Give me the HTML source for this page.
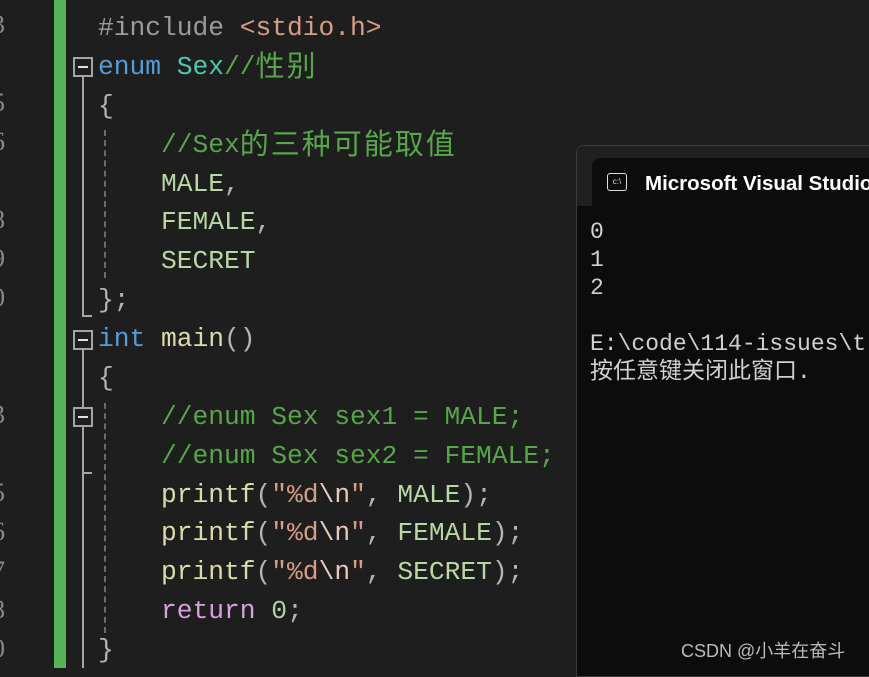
<!DOCTYPE html>
<html><head><meta charset="utf-8"><style>
body{margin:0;width:869px;height:668px;overflow:hidden;background:#1e1e1e;position:relative;font-family:"Liberation Mono","Noto Sans CJK SC",monospace}
.l{position:absolute;left:98px;height:39px;line-height:39px;font-size:26.3px;white-space:pre;color:#b4b4b4;font-family:"Liberation Mono","Noto Serif CJK SC",monospace;letter-spacing:-0.03px}
.cj{letter-spacing:2px;font-size:29px;font-family:"Noto Sans CJK SC",sans-serif;line-height:0;position:relative;top:2px}
.pp{color:#9b9b9b}.inc{color:#d69d85}.kw{color:#569cd6}.ty{color:#4ec9b0}.cm{color:#57a64a}.en{color:#b8d7a3}.fn{color:#dcdcaa}.st{color:#d69d85}.es{color:#e8c9bb}.rt{color:#d8a0df}.nu{color:#b5cea8}
.box{position:absolute;left:73px;width:16px;height:16px;border:2px solid #a5a5a5;box-sizing:content-box;background:#1e1e1e;z-index:2}
.box:after{content:"";position:absolute;left:3px;top:7px;width:10px;height:2px;background:#e0e0e0}
.v{position:absolute;width:2px;background:#a5a5a5}
.d{position:absolute;left:104px;width:0;border-left:2px dashed #6a6a6a}
.ln{position:absolute;left:-8px;font-size:26px;color:#8a8a8a;font-family:"Liberation Serif",serif}
</style></head><body>
<div style="position:absolute;left:54px;top:0;width:12px;height:668px;background:#57b356"></div>
<div class="ln" style="top:10px">3</div><div class="ln" style="top:88px">5</div><div class="ln" style="top:127px">6</div><div class="ln" style="top:205px">8</div><div class="ln" style="top:244px">9</div><div class="ln" style="top:283px">0</div><div class="ln" style="top:400px">3</div><div class="ln" style="top:478px">5</div><div class="ln" style="top:517px">6</div><div class="ln" style="top:556px">7</div><div class="ln" style="top:595px">8</div><div class="ln" style="top:634px">0</div>

<div class="box" style="top:57px"></div>
<div class="v" style="left:82px;top:77px;height:240px"></div>
<div class="v" style="left:82px;top:315px;width:10px;height:2px"></div>
<div class="d" style="top:130px;height:148px"></div>

<div class="box" style="top:330px"></div>
<div class="v" style="left:82px;top:350px;height:318px"></div>
<div class="box" style="top:407px"></div>
<div class="v" style="left:82px;top:472px;width:10px;height:2px"></div>
<div class="d" style="top:403px;height:230px"></div>

<div class="l" style="top:9px"><span class="pp">#include </span><span class="inc">&lt;stdio.h&gt;</span></div>
<div class="l" style="top:48px"><span class="kw">enum</span> <span class="ty">Sex</span><span class="cm">//<span class="cj">性别</span></span></div>
<div class="l" style="top:87px">{</div>
<div class="l" style="top:126px">    <span class="cm">//Sex<span class="cj">的三种可能取值</span></span></div>
<div class="l" style="top:165px">    <span class="en">MALE</span>,</div>
<div class="l" style="top:203px">    <span class="en">FEMALE</span>,</div>
<div class="l" style="top:242px">    <span class="en">SECRET</span></div>
<div class="l" style="top:281px">};</div>
<div class="l" style="top:320px"><span class="kw">int</span> <span class="fn">main</span>()</div>
<div class="l" style="top:359px">{</div>
<div class="l" style="top:398px">    <span class="cm">//enum Sex sex1 = MALE;</span></div>
<div class="l" style="top:437px">    <span class="cm">//enum Sex sex2 = FEMALE;</span></div>
<div class="l" style="top:476px">    <span class="fn">printf</span>(<span class="st">"%d</span><span class="es">\n</span><span class="st">"</span>, <span class="en">MALE</span>);</div>
<div class="l" style="top:514px">    <span class="fn">printf</span>(<span class="st">"%d</span><span class="es">\n</span><span class="st">"</span>, <span class="en">FEMALE</span>);</div>
<div class="l" style="top:553px">    <span class="fn">printf</span>(<span class="st">"%d</span><span class="es">\n</span><span class="st">"</span>, <span class="en">SECRET</span>);</div>
<div class="l" style="top:592px">    <span class="rt">return</span> <span class="nu">0</span>;</div>
<div class="l" style="top:631px">}</div>

<div style="position:absolute;left:576px;top:145px;width:300px;height:530px;background:#0c0c0c;border:1px solid #3a3a3a;border-radius:8px 0 0 0;z-index:3">
  <div style="position:absolute;left:0;top:0;right:0;height:60px;background:#202020;border-radius:8px 0 0 0"></div>
  <div style="position:absolute;left:15px;top:12px;right:0;height:48px;background:#0c0c0c;border-radius:8px 0 0 0"></div>
  <div style="position:absolute;left:30px;top:27px;width:20px;height:18px;border:1.5px solid #ddd;border-radius:3px;box-sizing:border-box;font:8px 'Liberation Sans',sans-serif;color:#ddd;line-height:15px;text-align:center">c:\</div>
  <div style="position:absolute;left:68px;top:26px;font:bold 20.5px 'Liberation Sans',sans-serif;color:#fff;white-space:nowrap">Microsoft Visual Studio</div>
  <div style="position:absolute;left:13px;top:72px;font-size:23px;line-height:28px;color:#d0d0d0;white-space:pre;font-family:'Liberation Mono','Noto Sans CJK SC',monospace">0
1
2

E:\code\114-issues\t
按任意键关闭此窗口.</div>
</div>
<div style="position:absolute;left:681px;top:637px;font:18px 'Liberation Sans','Noto Sans CJK SC',sans-serif;color:#bbb;z-index:4">CSDN @小羊在奋斗</div>
</body></html>
